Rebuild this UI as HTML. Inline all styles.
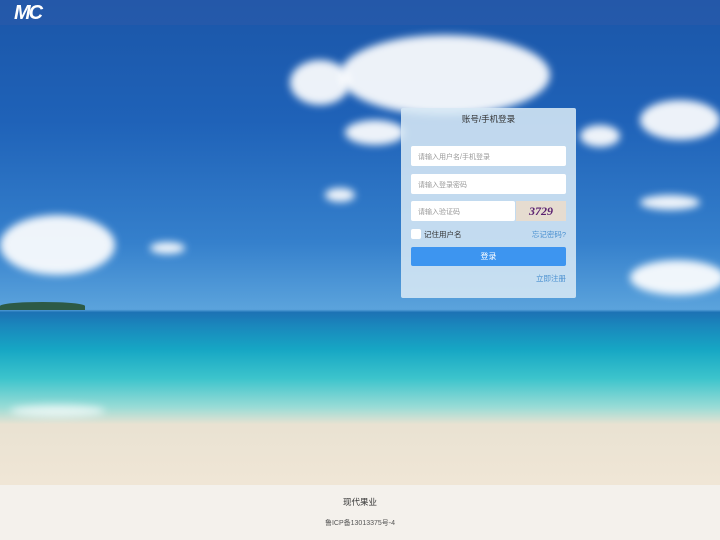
<!DOCTYPE html><html><head><meta charset="utf-8"><style>
*{margin:0;padding:0;box-sizing:border-box}
body{width:720px;height:540px;overflow:hidden;position:relative;font-family:"Liberation Sans","Noto Sans CJK SC",sans-serif;}
.bg{position:absolute;left:0;top:0;width:720px;height:485px;background:linear-gradient(180deg,#1b56a8 0%,#1f62b8 25%,#3580cc 50%,#5ba3dc 63.8%,#1c72b4 64.4%,#1a86bc 67%,#16a6c4 72%,#3cc4cc 78%,#9adcd6 84%,#e9e2d2 87.5%,#f0e6d6 100%);}
.cloud{position:absolute;background:#fff;border-radius:50%;filter:blur(4px);opacity:.92}
.hdr{position:absolute;left:0;top:0;width:720px;height:25px;background:rgba(40,90,170,.75)}
.logo{position:absolute;left:14px;top:2px;color:#fff;font:italic bold 20px "Liberation Sans",sans-serif;letter-spacing:-2px}
.box{position:absolute;left:401px;top:108px;width:175px;height:190px;background:rgba(215,232,245,.88);border-radius:2px}
.t{position:absolute;top:5px;width:100%;text-align:center;font-size:8.5px;color:#333}
.in{position:absolute;left:10px;width:155px;height:20px;background:#fff;border-radius:2px;font-size:7px;color:#999;padding:6px 0 0 7px}
.btn{position:absolute;left:10px;top:139px;width:155px;height:19px;background:#3d95f0;border-radius:2px;color:#fff;font-size:8px;text-align:center;line-height:19px}
.ft{position:absolute;left:0;top:485px;width:720px;height:55px;background:#f4f1ec;text-align:center}
</style></head><body>
<div class="bg"></div>
<div class="cloud" style="left:290px;top:60px;width:60px;height:45px"></div>
<div class="cloud" style="left:340px;top:35px;width:210px;height:80px"></div>
<div class="cloud" style="left:345px;top:120px;width:60px;height:25px"></div>
<div class="cloud" style="left:640px;top:100px;width:80px;height:40px"></div>
<div class="cloud" style="left:580px;top:125px;width:40px;height:22px"></div>
<div class="cloud" style="left:0;top:215px;width:115px;height:60px"></div>
<div class="cloud" style="left:640px;top:195px;width:60px;height:15px"></div>
<div class="cloud" style="left:630px;top:260px;width:95px;height:35px"></div>
<div class="cloud" style="left:325px;top:188px;width:30px;height:14px"></div>
<div class="cloud" style="left:150px;top:242px;width:35px;height:12px"></div>
<div class="cloud" style="left:10px;top:405px;width:95px;height:12px;opacity:.7"></div>
<div style="position:absolute;left:0;top:302px;width:85px;height:8px;background:#2d5a45;border-radius:50% 50% 0 0"></div>
<div class="hdr"></div><div class="logo">MC</div>
<div class="box">
<div class="t">账号/手机登录</div>
<div class="in" style="top:38px">请输入用户名/手机登录</div>
<div class="in" style="top:66px">请输入登录密码</div>
<div class="in" style="top:93px;width:104px">请输入验证码</div>
<div style="position:absolute;left:115px;top:93px;width:50px;height:20px;background:#e6dcd0;color:#5a2070;font:italic bold 12px 'Liberation Serif',serif;text-align:center;line-height:20px">3729</div>
<div style="position:absolute;left:10px;top:121px;width:10px;height:10px;background:#fff;border-radius:2px"></div>
<div style="position:absolute;left:23px;top:121px;font-size:7.5px;color:#333">记住用户名</div>
<div style="position:absolute;right:10px;top:121px;font-size:7.5px;color:#4a90d0">忘记密码?</div>
<div class="btn">登录</div>
<div style="position:absolute;right:10px;top:165px;font-size:7.5px;color:#4a90d0">立即注册</div>
</div>
<div class="ft"><div style="padding-top:11px;font-size:8.5px;color:#333">现代果业</div><div style="padding-top:10px;font-size:7px;color:#555">鲁ICP备13013375号-4</div></div>
</body></html>
